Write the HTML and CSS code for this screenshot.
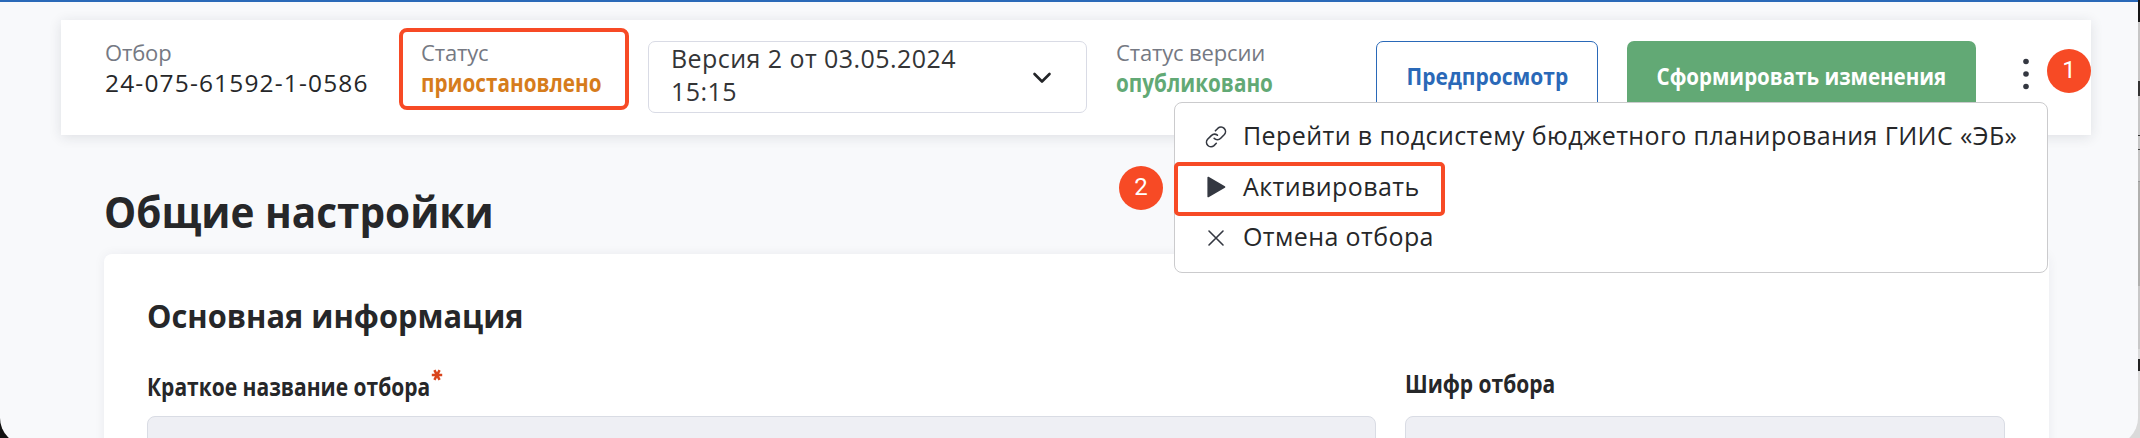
FILE: index.html
```html
<!DOCTYPE html>
<html lang="ru">
<head>
<meta charset="utf-8">
<title>Общие настройки</title>
<link rel="stylesheet" href="styles.css">
</head>
<body>
<div class="desktop">
<div class="window">
  <header class="toolbar">
    <div class="field field-id">
      <div class="label">Отбор</div>
      <div class="value number">24-075-61592-1-0586</div>
    </div>
    <div class="field field-status">
      <div class="label">Статус</div>
      <div class="value strong orange">приостановлено</div>
    </div>
    <div class="select">
      <div class="select-text">Версия 2 от 03.05.2024<br>15:15</div>
      <svg class="chevron" width="20" height="14" viewBox="0 0 20 14"><path d="M2.5 3 L10 10.5 L17.5 3" fill="none" stroke="#222427" stroke-width="2.6" stroke-linecap="round" stroke-linejoin="round"/></svg>
    </div>
    <div class="field field-version">
      <div class="label">Статус версии</div>
      <div class="value strong green">опубликовано</div>
    </div>
    <div class="button outline"><span>Предпросмотр</span></div>
    <div class="button filled"><span>Сформировать изменения</span></div>
    <svg class="dots" width="8" height="34" viewBox="0 0 8 34"><g fill="#343841"><circle cx="4" cy="4.5" r="2.8"/><circle cx="4" cy="17" r="2.8"/><circle cx="4" cy="29.5" r="2.8"/></g></svg>
  </header>

  <h1 class="title">Общие настройки</h1>

  <section class="card">
    <h2 class="subtitle">Основная информация</h2>
    <div class="form">
      <div class="form-col">
        <div class="form-label"><span>Краткое название отбора</span><svg class="star" width="12" height="12" viewBox="0 0 12 12"><path d="M.8 6H11.2M3.4 1.2L8.6 10.8M8.6 1.2L3.4 10.8" stroke="#d9441c" stroke-width="2.5" fill="none"/></svg></div>
        <div class="input"></div>
      </div>
      <div class="form-col">
        <div class="form-label short"><span>Шифр отбора</span></div>
        <div class="input"></div>
      </div>
    </div>
  </section>

  <div class="menu">
    <div class="menu-item">
      <svg class="icon" width="22" height="22" viewBox="0 0 22 22"><g fill="none" stroke="#343841" stroke-width="1.6" stroke-linecap="round" stroke-linejoin="round"><path d="M12.4 9.2A4.7 4.7 0 0 0 6.3 9.6L2.6 13.3A4.5 4.5 0 0 0 9 19.6L11.3 17.3"/><path d="M9.2 12.4A4.7 4.7 0 0 0 15.7 12.2L19.4 8.5A4.5 4.5 0 0 0 13 2.2L10.4 4.8"/></g></svg>
      <span>Перейти в подсистему бюджетного планирования ГИИС «ЭБ»</span>
    </div>
    <div class="menu-item highlighted">
      <svg class="icon" width="22" height="22" viewBox="0 0 22 22"><path d="M3.2 1.5L19.5 11L3.2 20.5Z" fill="#343841" stroke="#343841" stroke-width="1.6" stroke-linejoin="round"/></svg>
      <span>Активировать</span>
    </div>
    <div class="menu-item">
      <svg class="icon" width="22" height="22" viewBox="0 0 22 22"><path d="M4 4L18 18M18 4L4 18" fill="none" stroke="#343841" stroke-width="1.6" stroke-linecap="round"/></svg>
      <span>Отмена отбора</span>
    </div>
  </div>
  <div class="badge badge-one">1</div>
  <div class="badge badge-two">2</div>
</div>
</div>
</body>
</html>
```
FILE: styles.css
```css
*, *::after { box-sizing: border-box; }
body { margin: 0; font-family: "Open Sans", "Noto Sans", sans-serif; font-size: 25px; color: #262729; overflow: hidden; }
h1, h2 { margin: 0; }
.desktop { width: 2140px; height: 438px; overflow: hidden; background: linear-gradient(#151515 22px, #c6c6c6 22px 81px, #333 81px 96px, #c6c6c6 96px 135px, #333 135px 136px, #c6c6c6 136px 149px, #444 149px 150px, #c6c6c6 150px 181px, #999 181px 182px, #b0b0ae 182px 286px, #c8c8c8 286px 349px, #dadada 349px 359px, #222 359px 371px, #dadada 371px) right / 40px 100% no-repeat #111; }
.window { position: relative; width: 2138px; height: 445px; padding: 18px 47px 0 61px; background: #f8f9fb; border-top: 2px solid #2a69b8; border-radius: 0 0 27px 27px; }
.toolbar { display: flex; align-items: flex-start; height: 115px; padding: 8px 0 0 44px; background: #fff; box-shadow: 0 2px 12px rgba(30, 40, 60, .12); }
.field { border: 4px solid transparent; border-width: 4px 0; padding: 6px 0 8px; white-space: nowrap; }
.field-id { width: 294px; }
.field-status { width: 230px; border: 4px solid #f74a25; border-radius: 8px; padding-left: 18px; }
.field-version { width: 260px; margin-left: 29px; }
.label { font-size: 22px; line-height: 29px; color: #757983; letter-spacing: -.15px; }
.value { font-size: 24.5px; line-height: 31px; }
.number { letter-spacing: 1.16px; }
.strong { width: max-content; font-weight: 700; transform: scaleX(.845); transform-origin: left; }
.orange { color: #d67c1c; }
.green { color: #62a975; }
.select { display: flex; justify-content: space-between; width: 439px; height: 72px; margin: 13px 0 0 19px; padding: 0 34px 0 22px; border: 1px solid #d9dbe5; border-radius: 7px; }
.select-text { font-size: 25px; line-height: 33px; color: #333436; letter-spacing: .44px; }
.chevron { margin-top: 29px; }
.button { display: flex; align-items: center; justify-content: center; height: 69px; margin-top: 13px; border-radius: 7px; font-size: 24px; font-weight: 700; white-space: nowrap; }
.button span { transform: scaleX(.855); }
.outline { width: 222px; border: 1px solid #2a69b8; color: #2a69b8; }
.outline span { transform: scaleX(.875); }
.filled { width: 349px; margin-left: 29px; background: #62a975; color: #fff; }
.dots { margin: 29px 0 0 46px; }
.title { width: max-content; margin: 48px 0 0 43px; font-size: 42.5px; line-height: 58px; transform: scaleX(.953); transform-origin: left; }
.card { width: 1945px; height: 240px; margin: 13px 0 0 43px; padding: 41px 44px 0 43px; background: #fff; border-radius: 8px; box-shadow: 0 0 12px rgba(30, 40, 60, .06); }
.subtitle { width: max-content; font-size: 31.5px; line-height: 42px; transform: scaleX(.977); transform-origin: left; }
.form { display: grid; grid-template-columns: 1229px 600px; gap: 29px; margin-top: 27px; }
.form-label { display: flex; height: 52px; padding: 5px 0 0 0; font-size: 24.5px; line-height: 35px; font-weight: 700; }
.form-label span { transform: scaleX(.857); transform-origin: left; }
.short { padding-top: 2px; }
.star { margin: 0 0 0 -46px; }
.input { height: 70px; background: #eeeff4; border: 1px solid #d9dce4; border-radius: 8px; }
.menu { position: absolute; left: 1174px; top: 100px; width: 874px; height: 171px; padding: 7px 0 0 29px; background: #fff; border: 1px solid #cbcbcd; border-radius: 8px; }
.menu-item { position: relative; display: flex; align-items: center; gap: 16px; height: 50.5px; white-space: nowrap; letter-spacing: .4px; }
.icon { margin: 3px 0 0 1px; }
.highlighted::after { content: ""; position: absolute; left: -30px; top: 1.5px; width: 271px; height: 54px; border: 4px solid #f74a25; border-radius: 5px; }
.badge { position: absolute; width: 44px; height: 44px; border-radius: 50%; background: #f74a25; color: #fff; font-family: Roboto, sans-serif; font-size: 24px; line-height: 43px; text-align: center; }
.badge-one { left: 2047px; top: 47px; }
.badge-two { left: 1119px; top: 164px; }
```
